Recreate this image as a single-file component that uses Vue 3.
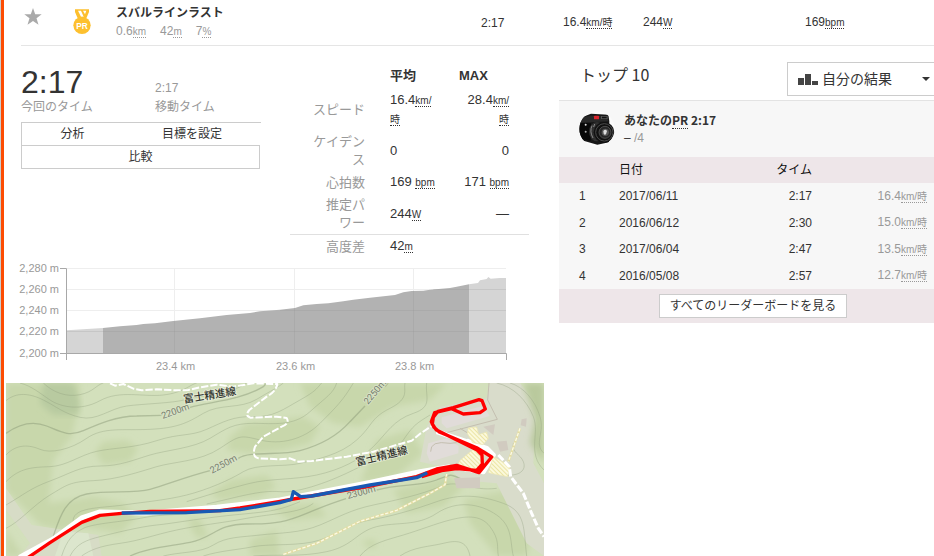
<script setup>
import { ref } from 'vue'

const scope = ref('mine')

const results = [
  { rank: 1, date: '2017/06/11', time: '2:17', speed: '16.4' },
  { rank: 2, date: '2016/06/12', time: '2:30', speed: '15.0' },
  { rank: 3, date: '2017/06/04', time: '2:47', speed: '13.5' },
  { rank: 4, date: '2016/05/08', time: '2:57', speed: '12.7' }
]

const yTicks = [
  { label: '2,280 m', y: 40.5 },
  { label: '2,260 m', y: 103.5 },
  { label: '2,240 m', y: 166.5 },
  { label: '2,220 m', y: 229.5 },
  { label: '2,200 m', y: 295.5 }
]
const xTicks = [
  { label: '23.4 km', x: 523.5 },
  { label: '23.6 km', x: 883.5 },
  { label: '23.8 km', x: 1240.5 }
]

const contours = [
  'M130 9C160 38 200 52 240 44S290 14 310 9',
  'M60 9C95 18 120 40 150 60S240 95 300 62S430 52 490 45S570 14 590 9',
  'M18 62C50 35 90 40 130 60S190 100 240 112S330 85 380 78S520 70 560 58S690 45 740 9',
  'M18 225C50 190 90 195 120 208S210 210 260 175S370 152 450 148S560 130 610 100S720 88 770 58S830 25 850 9',
  'M18 305C60 262 100 262 150 260S240 225 290 214S400 205 470 182S570 170 620 148S700 108 760 110S850 88 900 60S950 25 965 9',
  'M18 375C70 345 90 325 150 303S240 258 300 258S400 240 450 225S580 205 630 175S700 130 760 130S880 140 930 95S1000 40 1010 9',
  'M18 445C60 425 100 375 150 345S210 305 280 302S420 275 470 260S600 245 660 205S720 165 780 180S910 180 960 130S1030 60 1060 9',
  'M220 430C210 380 300 385 370 375S500 360 560 345S690 300 730 275S850 262 900 250S1020 225 1070 180S1110 115 1170 85S1210 30 1215 9',
  'M560 365C640 340 690 325 750 310S880 300 950 285S1080 240 1120 200S1180 120 1240 100S1275 50 1280 9',
  'M620 372C720 350 780 330 840 335S1000 300 1060 270S1180 225 1210 180S1250 130 1290 105',
  'M185 528C200 480 220 460 250 445S370 425 420 415S500 405 560 402',
  'M210 528C230 490 260 480 300 470S420 440 470 435S600 415 700 405S830 395 900 365',
  'M245 528C270 510 300 498 360 490S460 465 530 450S660 430 740 415S900 400 940 370',
  'M490 528C540 515 600 520 640 495S720 472 780 465S900 460 960 435S1050 390 1120 375S1260 345 1320 320S1410 335 1490 325',
  'M610 528C660 512 710 510 760 500S900 500 960 480S1050 430 1110 420S1240 390 1310 365S1440 345 1510 370S1570 450 1580 528',
  'M760 528C830 522 900 532 980 515S1070 455 1130 440S1250 440 1310 400S1440 370 1490 405S1530 490 1540 528',
  'M1080 528C1110 490 1160 480 1210 465S1310 430 1350 420S1440 400 1470 440S1490 500 1495 528',
  'M1200 528C1240 500 1290 500 1330 490S1400 480 1410 528',
  'M1490 9C1540 20 1580 60 1600 110S1580 220 1632 270',
  'M1530 9C1570 20 1605 60 1620 110S1600 190 1632 220',
  'M1510 285C1560 290 1580 270 1570 245S1535 220 1540 190'
]
const majorContours = [
  'M18 160C60 130 100 122 140 138S205 172 250 152S350 108 410 108L485 106M570 82C630 65 720 62 790 20L800 9',
  'M160 468C180 410 195 355 260 342S400 342 450 328S560 290 630 272M715 235C750 212 840 228 900 212S1010 170 1050 125L1095 78M1155 20L1164 9',
  'M390 528C440 505 500 500 570 487S650 432 740 432S860 425 920 400S1000 368 1038 356M1130 330C1200 310 1260 320 1310 300S1350 282 1390 300'
]
</script>

<template>
  <main class="page">
    <article class="segment">
      <header class="summary">
        <button class="icon-button" type="button" aria-label="お気に入り">
          <svg width="18" height="18" viewBox="0 0 18 18"><path fill="#aaa" d="M9 0l2.200 6.200h6.500l-5.200 4 2 6.600L9 12.900l-5.500 3.900 2-6.600L.3 6.200h6.500z" /></svg>
        </button>
        <svg class="medal" width="18" height="26" viewBox="0 0 54 78">
          <path fill="#fdbf2d" d="M6 1H48V9L40 28H14L6 9Z" />
          <path fill="#fff" d="M15 5H24L32 23H24ZM30 5H40L36 16Z" />
          <circle cx="27" cy="49" r="26" fill="#fdc02f" />
          <text x="27" y="59" text-anchor="middle" font-size="25" font-weight="700" fill="#fff">PR</text>
        </svg>
        <div class="segment-name">
          <h1>スバルラインラスト</h1>
          <p><span>0.6<abbr>km</abbr></span><span>42<abbr>m</abbr></span><span>7<abbr>%</abbr></span></p>
        </div>
        <span>2:17</span>
        <span>16.4<abbr>km/時</abbr></span>
        <span>244<abbr>W</abbr></span>
        <span>169<abbr>bpm</abbr></span>
      </header>

      <div class="columns">
        <section class="effort">
          <div class="overview">
            <div class="times">
              <div class="time-list">
                <div><strong class="big">2:17</strong><span>今回のタイム</span></div>
                <div><strong>2:17</strong><span>移動タイム</span></div>
              </div>
              <div class="actions">
                <div class="action-row">
                  <button type="button">分析</button>
                  <button type="button">目標を設定</button>
                </div>
                <button class="compare" type="button">比較</button>
              </div>
            </div>

            <table class="stats">
              <thead>
                <tr><td></td><th>平均</th><th>MAX</th></tr>
              </thead>
              <tbody>
                <tr><th>スピード</th><td>16.4<abbr>km/時</abbr></td><td>28.4<abbr>km/時</abbr></td></tr>
                <tr><th>ケイデンス</th><td>0</td><td>0</td></tr>
                <tr><th>心拍数</th><td>169 <abbr>bpm</abbr></td><td>171 <abbr>bpm</abbr></td></tr>
                <tr><th>推定パ<span class="keep">ワー</span></th><td>244<abbr>W</abbr></td><td>—</td></tr>
                <tr class="ruled"><th>高度差</th><td>42<abbr>m</abbr></td><td></td></tr>
              </tbody>
            </table>
          </div>

          <svg class="chart" viewBox="18 15 1614 345" role="img">
            <g stroke="#eee" stroke-width="3">
              <line v-for="t in yTicks" :key="t.label" x1="201" x2="1518" :y1="t.y" :y2="t.y" />
              <line v-for="t in xTicks" :key="t.label" :x1="t.x" :x2="t.x" y1="39" y2="294" />
            </g>
            <path fill="#d5d5d5" d="M201 294V226L225 224L309 219V294ZM1407 294V88L1434 84L1440 76L1460 72L1465 66L1472 71L1500 69L1518 69V294Z" />
            <path fill="#b2b2b2" d="M309 294V219L360 214L410 210L430 207L465 205L520 198L600 190L680 180L750 174L780 169L840 164L885 159L910 151L950 147L985 145L1030 139L1060 134L1110 128L1185 120L1210 112L1235 108L1270 107L1290 104L1350 99L1370 95L1407 88V294Z" />
            <g stroke="#8c8c8c" stroke-opacity=".2" stroke-width="3">
              <path d="M201 229.500H1518M840 166.500H1518M1300 103.500H1518M523.500 199V294M883.500 160V294M1240.500 108V294" />
            </g>
            <path fill="none" stroke="#a8a8a8" stroke-width="3" d="M180 40.500H199.500V315M180 295.500H1519.500V315" />
            <text v-for="t in yTicks" :key="t.label" x="177" :y="t.y + 11" text-anchor="end">{{ t.label }}</text>
            <text v-for="t in xTicks" :key="t.label" :x="t.x + 3" y="345" text-anchor="middle">{{ t.label }}</text>
          </svg>

          <svg class="map" viewBox="18 9 1614 519" role="img">
            <defs>
              <filter id="soft"><feGaussianBlur stdDeviation="9" /></filter>
              <pattern id="hatch" width="9" height="9" patternUnits="userSpaceOnUse" patternTransform="rotate(-45)">
                <rect width="9" height="9" fill="#fbf9dc" /><rect width="3" height="9" fill="#ebe4a4" />
              </pattern>
            </defs>
            <rect x="18" y="9" width="1614" height="519" fill="#d3e0bc" />
            <g fill="#c8d7ab" filter="url(#soft)">
              <path d="M18 9H240L230 110L215 170L160 240L145 370L280 350L370 370L410 410L360 460L240 440L180 450L120 435L18 330Z" />
              <path d="M285 215L310 185L380 180L415 205L390 245L310 255ZM690 170L740 130L830 120L910 110L960 140L930 190L850 210L750 220L680 210Z" />
              <path d="M630 340L690 300L800 285L830 320L780 350L660 360ZM560 420L600 415L625 470L590 475ZM750 480L830 450L840 528H750Z" />
              <path d="M900 9H1340L1290 60L1180 80L1080 140L1000 130L930 80ZM1130 180L1230 150L1270 220L1190 290L1080 310ZM810 380L950 370L980 410L870 420Z" />
              <path d="M1180 330L1340 290L1390 320L1330 380L1220 400ZM1390 360L1520 330L1600 440L1580 528H1490L1410 430ZM1090 480L1130 480L1125 505L1095 500ZM18 450L70 528H18Z" />
            </g>
            <path fill="#b8caa0" filter="url(#soft)" d="M130 9H220L240 70L235 105H160L120 70Z" />
            <path fill="#d7dcc6" d="M18 325L95 435L295 465L305 528H165L60 528L90 490L18 390Z" />
            <path fill="#dce6cd" d="M190 455L265 460L280 528H165Z" />
            <path fill="#d9dccb" d="M1470 9H1560L1610 70L1600 250L1632 310V528L1580 490L1510 350L1490 310L1380 300L1350 265L1260 245L1280 140L1320 80L1460 55Z" />
            <path fill="#b9c99d" filter="url(#soft)" d="M1570 9H1632V250L1590 190L1605 120Z" />
            <g fill="none" stroke="#8d9c7b" stroke-opacity=".34" stroke-width="3">
              <path v-for="d in contours" :key="d" :d="d" />
            </g>
            <g fill="none" stroke="#8a9878" stroke-opacity=".48" stroke-width="4">
              <path v-for="d in majorContours" :key="d" :d="d" />
            </g>

            <path fill="#e1dcd9" d="M1325 112L1450 77L1469 108L1340 145L1325 130ZM1285 190L1340 175L1376 198L1375 220L1290 245L1280 220Z" />
            <path fill="#d1cbc0" d="M1490 185L1520 182L1525 210L1500 215ZM1362 295L1440 292L1440 325L1370 325ZM1450 140L1485 133L1480 165ZM1565 118L1580 115L1578 140L1562 136Z" />
            <path fill="none" stroke="#c4bfb0" stroke-width="3" d="M1467 9L1463 60L1492 118L1340 158M1292 215Q1290 180 1350 190L1370 188M1380 145L1430 175" />
            <path fill="none" stroke="#fff" stroke-width="15" stroke-linejoin="round" d="M58 532L160 477L245 414L300 396L440 399L650 382L840 360L1110 307L1260 275L1350 260M1310 155L1460 205L1480 225L1450 275L1365 261M1400 182L1450 205" />
            <path fill="url(#hatch)" stroke="#eee8b2" stroke-width="2" d="M1405 144L1430 141L1436 164L1460 156L1465 175L1449 194L1418 188L1402 160ZM1378 243L1420 208L1452 225L1450 255L1430 270L1375 254ZM1480 230L1530 258L1523 290L1465 278Z" />
            <path fill="none" stroke="#e4dda2" stroke-width="7" d="M850 523L950 490L1080 424L1190 391L1290 340L1335 314L1340 282M1560 145L1525 245" />
            <path fill="none" stroke="#fbfae5" stroke-width="4" stroke-dasharray="10 5" d="M850 523L950 490L1080 424L1190 391L1290 340L1335 314L1340 282M1560 145L1525 245" />
            <g fill="none" stroke="#fff" stroke-width="6" stroke-linejoin="round" stroke-dasharray="22 6">
              <path d="M330 10L345 17L370 12L400 26L425 31L470 28L530 31L565 30L600 22L650 14L700 20L760 10L832 12Q828 35 800 50L748 90Q733 108 752 113L830 110L860 114Q870 130 845 140L790 170L765 200Q755 231 775 235L840 238L870 235L895 245L935 243L1040 230L1120 215L1235 182L1262 160L1295 138" />
              <path d="M1495 225L1528 260L1532 290L1570 340L1595 400L1615 445L1632 470" stroke-width="9" />
            </g>
            <g class="map-label">
              <text transform="translate(552 69) rotate(-9)">富士精進線</text>
              <text transform="translate(1070 258) rotate(-14)">富士精進線</text>
            </g>
            <g class="elevation-label">
              <text transform="translate(488 117) rotate(-20)">2200m</text>
              <text transform="translate(636 281) rotate(-28)">2250m</text>
              <text transform="translate(1104 75) rotate(-50)">2250m</text>
              <text transform="translate(1044 357) rotate(-15)">2300m</text>
            </g>
            <path fill="none" stroke="#f00" stroke-width="10" stroke-linejoin="round" d="M85 532L150 488L245 427L300 406L365 400L450 394L660 392L720 384L840 364L880 357L1110 318L1250 290L1310 267L1370 256L1437 278L1475 231L1430 203L1318 156L1302 142L1294 125L1304 98L1355 86L1390 102L1440 98L1456 87L1446 62L1437 59L1360 83L1314 94L1300 112L1297 132L1308 149L1430 209L1446 225L1447 252L1430 271L1370 266L1325 272L1265 290" />
            <path fill="none" stroke="#1859b4" stroke-width="10" stroke-linejoin="round" d="M365 399L560 398L720 389L840 368L874 358L880 335L902 350L935 348L1110 315L1250 293L1282 278" />
          </svg>
        </section>

        <section class="leaderboard">
          <div class="board-head">
            <h2>トップ 10</h2>
            <label class="filter">
              <svg width="20" height="12" viewBox="0 0 20 12"><path fill="#444" d="M0 5h6v7H0zM7 1h6v11H7zM14 8h6v4h-6z" /></svg>
              <select v-model="scope" aria-label="リーダーボード">
                <option value="mine">自分の結果</option>
              </select>
              <svg class="caret" width="8" height="4" viewBox="0 0 8 4"><path fill="#333" d="M0 0h8L4 4z" /></svg>
            </label>
          </div>
          <div class="personal-best">
            <svg width="36" height="36" viewBox="0 0 108 108" role="img">
              <clipPath id="avatar"><circle cx="54" cy="54" r="53" /></clipPath>
              <g clip-path="url(#avatar)">
                <rect width="108" height="108" fill="#fbfbfb" />
                <path fill="#171717" d="M0 28Q3 16 18 15L36 8L88 11L91 31L90 94L55 101L8 88L0 65Z" />
                <path fill="#292929" d="M8 19L35 14L83 16L88 31L37 34L3 35Z" />
                <path fill="#080808" d="M3 36L36 37L35 89L10 85L0 65Z" />
                <rect x="45" y="14" width="15" height="11" rx="2" fill="#d9252d" />
                <path fill="#555" d="M66 15H86V24H66Z" /><path fill="#111" d="M69 17H83V22H69Z" />
                <circle cx="20" cy="41" r="3" fill="#ddd" /><circle cx="20" cy="62" r="3" fill="#aaa" />
                <ellipse cx="54" cy="62" rx="24" ry="29" fill="#303030" />
                <circle cx="75" cy="64" r="31" fill="#111" />
                <circle cx="76" cy="64" r="26" fill="none" stroke="#4c4c4c" stroke-width="3" />
                <circle cx="78" cy="64" r="18" fill="#262626" stroke="#666" stroke-width="2" />
                <circle cx="79" cy="64" r="11" fill="#555" />
                <path fill="#ddd" d="M73 60Q79 53 84 60L81 70Q76 73 74 68Z" />
                <path fill="none" stroke="#888" stroke-width="3" d="M39 44Q31 62 42 81M47 39L44 48" />
              </g>
            </svg>
            <div>
              <h3>あなたの<abbr>PR</abbr> 2:17</h3>
              <p>– <span>/4</span></p>
            </div>
          </div>
          <table class="results">
            <thead>
              <tr><th class="rank"></th><th class="date">日付</th><th class="time">タイム</th><th class="speed"></th></tr>
            </thead>
            <tbody>
              <tr v-for="r in results" :key="r.rank">
                <td class="rank">{{ r.rank }}</td>
                <td class="date">{{ r.date }}</td>
                <td class="time">{{ r.time }}</td>
                <td class="speed">{{ r.speed }}<abbr>km/時</abbr></td>
              </tr>
            </tbody>
          </table>
          <div class="board-foot"><button type="button">すべてのリーダーボードを見る</button></div>
        </section>
      </div>
    </article>
  </main>
</template>

<style>
body {
  background: #fff;
  overflow: hidden;
}
</style>

<style scoped>
* {
  box-sizing: border-box;
}
.page {
  border-left: 1px solid #ccc;
  color: #333;
  font: 12px/14px "Liberation Sans", "Noto Sans CJK JP", sans-serif;
}
.segment {
  border-left: 3px solid #fc4c02;
}
h1, h2, h3, p {
  margin: 0;
}
button {
  font: inherit;
  color: inherit;
  background: #fff;
  border: 0;
  padding: 0;
}
abbr {
  font-size: 10px;
  text-decoration: none;
  border-bottom: 1px dotted currentColor;
}
.summary {
  display: grid;
  grid-template-columns: 52px 43px minmax(0, 1fr) 82px 80px 162px 129px;
  align-items: center;
  height: 46px;
  margin-left: 17px;
  border-bottom: 1px solid #e5e5e5;
}
.icon-button {
  justify-self: start;
  width: 18px;
  height: 18px;
  margin: 0 0 12px 3px;
}
.icon-button svg,
.medal,
.chart,
.map {
  display: block;
}
.medal {
  margin-bottom: 2px;
}
.segment-name h1 {
  font-size: 12px;
  line-height: 18px;
}
.segment-name p {
  display: flex;
  gap: 14px;
  line-height: 18px;
  color: #999;
}
.columns {
  display: grid;
  grid-template-columns: minmax(0, 540fr) minmax(0, 375fr);
  column-gap: 15px;
}
.effort {
  padding-left: 2px;
}
.overview {
  display: flex;
  justify-content: space-between;
  align-items: flex-start;
  padding: 16px 15px 2px;
}
.times {
  width: 240px;
  padding-top: 2px;
}
.time-list {
  display: grid;
  grid-template-columns: 134px 1fr;
  align-items: end;
  color: #999;
}
.time-list strong,
.time-list span {
  display: block;
}
.time-list strong {
  font-weight: 400;
  line-height: 24px;
}
.time-list .big {
  font-size: 32px;
  line-height: 36px;
  color: #333;
}
.actions {
  margin-top: 8px;
}
.action-row {
  display: grid;
  grid-template-columns: 101px 1fr;
  height: 23px;
  border: solid #ccc;
  border-width: 1px 0 0 1px;
}
.compare {
  width: 239px;
  height: 24px;
  border: 1px solid #ccc;
}
.stats {
  width: 239px;
  table-layout: fixed;
  border-collapse: collapse;
  font-size: 13px;
  line-height: 18px;
}
.stats td,
.stats th {
  padding: 2px 0;
  text-align: left;
}
.stats thead th,
.stats thead td {
  height: 27px;
}
.stats tr > :first-child {
  width: 100px;
  padding-left: 23px;
  padding-right: 25px;
}
.stats tr > :nth-child(2) {
  width: 69px;
  padding-right: 19px;
}
.stats tr > :nth-child(3) {
  width: 70px;
  padding-right: 20px;
}
.stats tbody th {
  font-weight: 400;
  color: #999;
  text-align: right;
}
.stats tbody td:last-child {
  text-align: right;
}
.keep {
  display: inline-block;
  white-space: nowrap;
}
.ruled {
  border-top: 1px solid #e0e0e0;
}
.chart,
.map {
  width: 100%;
}
.chart text {
  font-size: 33px;
  fill: #999;
}
.map {
  margin-top: 8px;
}
.map-label text {
  font: 500 32px "Noto Sans CJK JP", sans-serif;
  fill: #33352f;
  stroke: #e7edd8;
  stroke-width: 5px;
  paint-order: stroke;
}
.elevation-label text {
  font: 28px Roboto, sans-serif;
  fill: #777f6d;
  stroke: #d9e3c8;
  stroke-width: 5px;
  paint-order: stroke;
}
.board-head {
  display: flex;
  justify-content: space-between;
  height: 55px;
  padding: 16px 0 4px 21px;
  border-bottom: 1px solid #e3e3e3;
}
.board-head h2 {
  font: 400 16px/24px "Noto Sans CJK JP", sans-serif;
}
.filter {
  display: flex;
  align-items: center;
  gap: 4px;
  width: 147px;
  height: 34px;
  padding: 0 4px 0 10px;
  border: 1px solid #ccc;
  border-right: 0;
}
.filter svg {
  flex: none;
}
.filter select {
  appearance: none;
  flex: 1;
  min-width: 0;
  padding: 0 0 2px;
  border: 0;
  background: none;
  color: #333;
  font: 14px/20px "Noto Sans CJK JP", sans-serif;
}
.personal-best {
  display: flex;
  align-items: center;
  gap: 9px;
  height: 56px;
  padding-left: 20px;
  background: #f7f7f7;
}
.personal-best h3 {
  font: 700 12px/18px "Noto Sans CJK JP", sans-serif;
}
.personal-best abbr {
  font-size: 12px;
}
.personal-best p {
  line-height: 18px;
}
.personal-best p span {
  color: #999;
}
.results {
  width: 100%;
  height: 132px;
  table-layout: fixed;
  border-collapse: collapse;
  background: #f7f7f7;
}
.results th,
.results td {
  height: 26px;
  padding: 0;
  font-weight: 400;
  text-align: left;
}
.results thead {
  background: #eee6e9;
  color: #111;
}
.results .rank {
  width: 60px;
  padding-left: 20px;
}
.results .time {
  width: 93px;
  text-align: right;
}
.results .speed {
  width: 122px;
  padding-right: 7px;
  text-align: right;
  color: #999;
}
.board-foot {
  display: flex;
  justify-content: center;
  padding: 5px 0;
  background: #eee6e9;
}
.board-foot button {
  height: 24px;
  padding: 0 10px;
  margin-left: 13px;
  border: 1px solid #ccc;
}
</style>
